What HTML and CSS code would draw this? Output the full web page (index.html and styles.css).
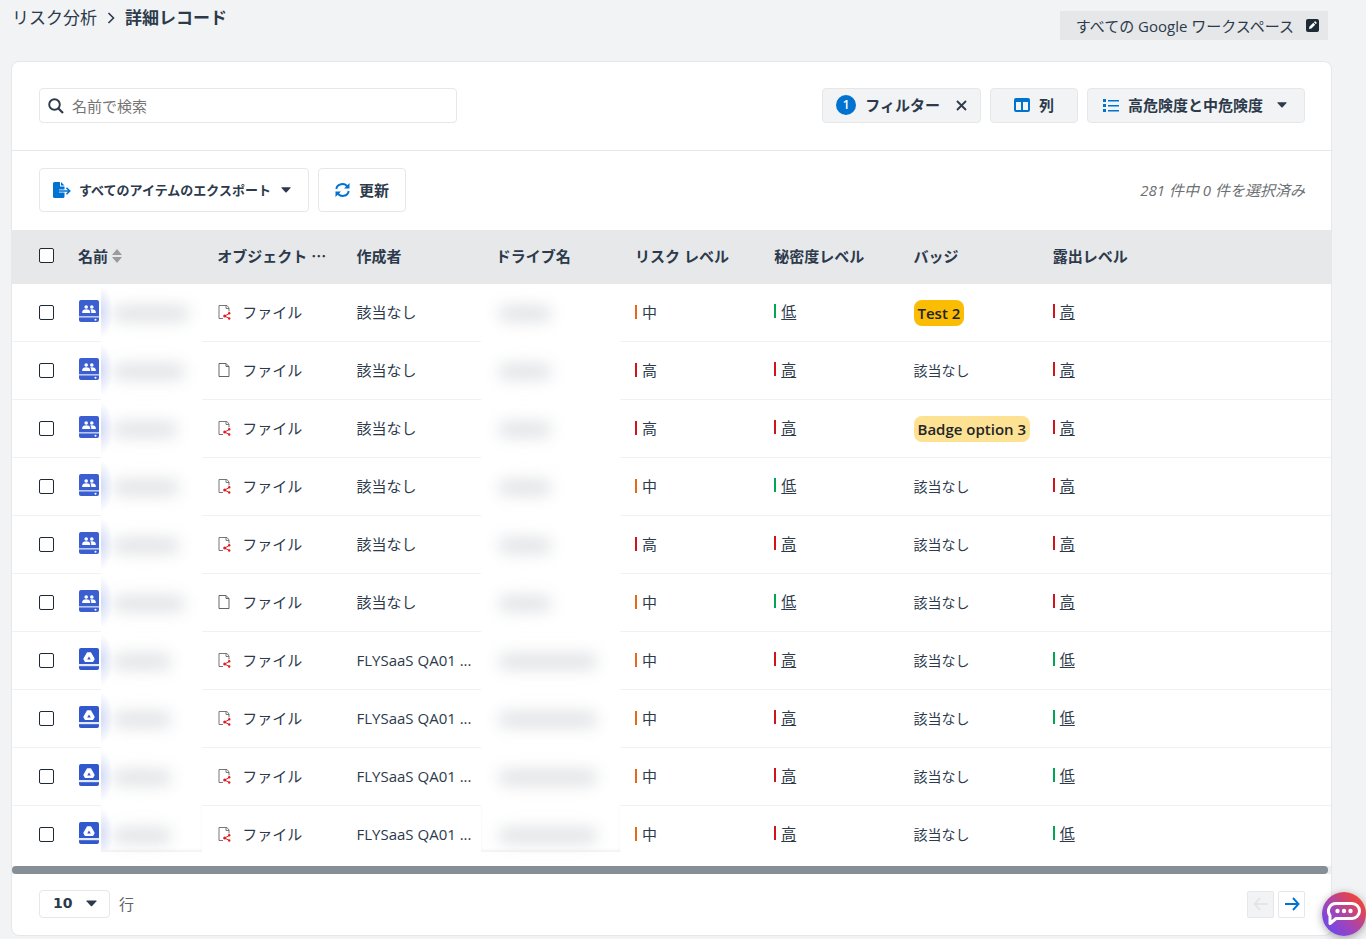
FILE: index.html
```html
<!DOCTYPE html>
<html lang="ja">
<head>
  <meta charset="UTF-8">
  <meta name="viewport" content="width=device-width, initial-scale=1.0">
  <title>詳細レコード</title>
  <link rel="stylesheet" href="styles.css">
</head>
<body>
  <svg class="sprite" aria-hidden="true">
    <symbol id="i-caret" viewBox="0 0 10 6"><path d="M0.8 0.3h8.4q.8 0 .3.7L5.6 5.3q-.6.6-1.2 0L.5 1Q0 .3.8.3z" fill="currentColor"/></symbol>
    <symbol id="i-shared" viewBox="0 0 20 22">
      <rect width="20" height="22" rx="2" fill="#3b5fd1"/>
      <rect y="16" width="20" height="1.6" fill="#b9c8f5"/>
      <circle cx="7.2" cy="7" r="1.8" fill="#fff"/><circle cx="12.8" cy="7" r="1.8" fill="#fff"/>
      <path d="M3.2 13v-1.2c0-1.7 2.4-2.5 4-2.5s4 .8 4 2.5V13zM12.2 13v-1.3c0-.9-.4-1.6-1-2.1 2-.7 5.6 0 5.6 2.2V13z" fill="#fff"/>
      <circle cx="16.5" cy="19.7" r="1" fill="#fff"/>
    </symbol>
    <symbol id="i-drive" viewBox="0 0 20 22">
      <rect width="20" height="22" rx="2" fill="#3158cd"/>
      <rect y="16" width="20" height="2.2" fill="#e3e9fb"/>
      <path d="M8.6 5h2.8l3.4 6-1.300 2.300H6.500L5.200 11z" fill="#fff" stroke="#fff" stroke-width="1.600" stroke-linejoin="round"/>
      <path d="M10 8.500l1.800 3H8.200z" fill="#3158cd"/>
    </symbol>
    <symbol id="i-file" viewBox="0 0 14 16">
      <path d="M1.500 1.500h7l3 3v10h-10zM8.500 1.500v3h3" fill="none" stroke="#666"/>
    </symbol>
    <symbol id="i-file-shared" viewBox="0 0 14 16">
      <path d="M5.500 14.500h-4v-13h8l2 2.500v3.500M8.500 1.500v3h3" fill="none" stroke="#777"/>
      <path d="M12 9.300l-4.800 2.700 4.800 2.700" fill="none" stroke="#e01b22"/>
      <circle cx="11.700" cy="9.300" r="1.200" fill="#e01b22"/><circle cx="7.200" cy="12" r="1.500" fill="#e01b22"/><circle cx="11.700" cy="14.500" r="1.200" fill="#e01b22"/>
    </symbol>
  </svg>

  <header class="page-header">
    <nav class="breadcrumb">
      <a href="#">リスク分析</a>
      <svg width="8" height="12" viewBox="0 0 8 12"><path d="M1.500 1l5 5-5 5" fill="none" stroke="currentColor" stroke-width="1.600"/></svg>
      <h1>詳細レコード</h1>
    </nav>
    <button class="workspace">
      すべての Google ワークスペース
      <svg width="13" height="13" viewBox="0 0 13 13"><rect width="13" height="13" rx="2" fill="#1f2a37"/><path d="M3 10l.5-2.400 3.800-3.800 1.900 1.900-3.800 3.800zM7.900 3.200l.7-.7q.5-.4 1 0l.9.900q.4.500 0 1l-.7.700z" fill="#fff"/></svg>
    </button>
  </header>

  <main class="card">
    <div class="toolbar filters">
      <label class="search">
        <svg width="16" height="16" viewBox="0 0 16 16"><circle cx="6.500" cy="6.500" r="5.300" fill="none" stroke="currentColor" stroke-width="1.900"/><path d="M10.500 10.500l4.500 4.500" stroke="currentColor" stroke-width="2.200"/></svg>
        <input type="search" placeholder="名前で検索" aria-label="名前で検索">
      </label>
      <div class="actions">
        <button class="btn filter">
          <span class="count">1</span>
          フィルター
          <svg class="close" width="11" height="11" viewBox="0 0 11 11"><path d="M1 1l9 9M10 1l-9 9" stroke="currentColor" stroke-width="1.800"/></svg>
        </button>
        <button class="btn columns">
          <svg width="16" height="14" viewBox="0 0 16 14"><path d="M2 0h12q2 0 2 2v10q0 2-2 2H2q-2 0-2-2V2q0-2 2-2zM2 4v8h5V4zM9 4v8h5V4z" fill="#0073d1" fill-rule="evenodd"/></svg>
          列
        </button>
        <label class="btn risk">
          <svg width="16" height="13" viewBox="0 0 16 13"><path d="M0 0h3v3H0zM0 5h3v3H0zM0 10h3v3H0zM5 1h11v1.500H5zM5 6h11v1.500H5zM5 11h11v1.500H5z" fill="#0073d1"/></svg>
          <select aria-label="危険度"><option>高危険度と中危険度</option></select>
          <svg class="caret" width="10" height="6"><use href="#i-caret"/></svg>
        </label>
      </div>
    </div>

    <div class="toolbar bulk">
      <div class="actions">
        <button class="btn-outline export">
          <svg width="18" height="16" viewBox="0 0 18 16"><path d="M1.500 0H7v4.500h4.500v3H6v3h5.500v4q0 1.500-1.500 1.500H1.500Q0 16 0 14.500v-13Q0 0 1.500 0zM8 0l3.500 3.500H8z" fill="#0073d1"/><path d="M6 9h10M13.500 5.800L16.700 9l-3.200 3.200" fill="none" stroke="#0073d1" stroke-width="1.600"/></svg>
          <span>すべてのアイテムのエクスポート</span>
          <svg class="caret" width="10" height="6"><use href="#i-caret"/></svg>
        </button>
        <button class="btn-outline">
          <svg width="15" height="14" viewBox="0 0 15 14"><path d="M1.300 6A6 5.600 0 0 1 12.500 4M13.700 8A6 5.600 0 0 1 2.500 10" fill="none" stroke="#0073d1" stroke-width="1.900"/><path d="M14.500 0v5.500H9zM.5 14V8.500H6z" fill="#0073d1"/></svg>
          更新
        </button>
      </div>
      <p class="selected">281 件中 0 件を選択済み</p>
    </div>

    <table>
      <colgroup>
        <col class="col-check"><col span="8"><col class="col-last">
      </colgroup>
      <thead>
        <tr>
          <th class="check"><input type="checkbox" aria-label="すべて選択"></th>
          <th><span class="sortable">名前
            <svg width="10" height="14" viewBox="0 0 10 14"><path d="M5 0l5 6H0zM5 14l5-6H0z" fill="#999b9e"/></svg></span></th>
          <th>オブジェクト <span class="more">…</span></th>
          <th>作成者</th>
          <th>ドライブ名</th>
          <th>リスク レベル</th>
          <th>秘密度レベル</th>
          <th>バッジ</th>
          <th>露出レベル</th>
          <th></th>
        </tr>
      </thead>
      <tbody id="records"></tbody>
    </table>
    <div class="scrollbar"><div class="thumb"></div></div>

    <footer class="pager">
      <label class="page-size">
        <span class="size-box">
          <select><option>10</option></select>
          <svg class="caret" width="11" height="7"><use href="#i-caret"/></svg>
        </span>
        行
      </label>
      <div class="pages">
        <button disabled aria-label="前へ"><svg width="16" height="14" viewBox="0 0 16 14"><path d="M15 7H1.500M7 1L1.500 7 7 13" fill="none" stroke="currentColor" stroke-width="1.900"/></svg></button>
        <button aria-label="次へ"><svg width="16" height="14" viewBox="0 0 16 14"><path d="M1 7h13.500M9 1l5.500 6L9 13" fill="none" stroke="currentColor" stroke-width="1.900"/></svg></button>
      </div>
    </footer>
  </main>

  <button class="chat" aria-label="チャット">
    <svg width="34" height="25" viewBox="0 0 34 25"><path d="M9 1.500h16a7.500 7.500 0 0 1 0 15H9l-6 5V13.500A7.500 7.500 0 0 1 9 1.500z" fill="none" stroke="#fff" stroke-width="3" stroke-linejoin="round"/><circle cx="10.500" cy="9" r="2.200" fill="#fff"/><circle cx="17" cy="9" r="2.200" fill="#fff"/><circle cx="23.500" cy="9" r="2.200" fill="#fff"/></svg>
  </button>

  <script src="script.js"></script>
</body>
</html>
```
FILE: styles.css
```css
:root {
  --text: #2c3a4b;
  --blue: #0073d1;
  --border: #e5e7e9;
  --page-bg: #f1f3f5;
}

* {
  box-sizing: border-box;
}

body {
  margin: 0;
  background: var(--page-bg);
  color: var(--text);
  font-family: "Open Sans", "Noto Sans CJK JP", sans-serif;
  font-size: 15px;
  line-height: 20px;
}

button,
input,
select {
  font: inherit;
  color: inherit;
}

select {
  appearance: none;
  border: 0;
  padding: 0;
  background: none;
}

svg {
  flex: none;
}

.sprite {
  position: absolute;
  width: 0;
  height: 0;
}

.page-header {
  display: flex;
  justify-content: space-between;
  align-items: flex-start;
  height: 61px;
  padding: 8px 38px 0 12px;
}

.breadcrumb {
  display: flex;
  align-items: center;
  gap: 10px;
  font-size: 17px;
}

.breadcrumb a {
  color: inherit;
  text-decoration: none;
}

.breadcrumb h1 {
  margin: 0;
  font-size: 17px;
  font-weight: 700;
}

.workspace {
  display: flex;
  align-items: center;
  gap: 12px;
  height: 29px;
  margin-top: 3px;
  padding: 0 9px 0 16px;
  border: 0;
  background: #e5e7e9;
}

.card {
  margin: 0 34px 4px 11px;
  border: 1px solid var(--border);
  border-radius: 8px;
  background: #fff;
}

.toolbar {
  display: flex;
  justify-content: space-between;
  align-items: center;
}

.filters {
  padding: 26px 26px 27px 27px;
  border-bottom: 1px solid var(--border);
}

.bulk {
  padding: 17px 26px 18px 27px;
}

.search {
  display: flex;
  align-items: center;
  gap: 8px;
  width: 418px;
  height: 35px;
  padding: 0 8px;
  border: 1px solid var(--border);
  border-radius: 4px;
}

.search input {
  flex: 1;
  padding: 0;
  border: 0;
  outline: 0;
}

.search input::placeholder {
  color: #757575;
}

.actions {
  display: flex;
  gap: 9px;
}

.btn,
.btn-outline {
  display: flex;
  align-items: center;
  border: 1px solid var(--border);
  border-radius: 4px;
  font-weight: 700;
}

.btn {
  gap: 9px;
  height: 35px;
  padding: 0 13px 1px;
  background: var(--page-bg);
}

.btn-outline {
  gap: 9px;
  height: 44px;
  padding: 0 16px;
  background: #fff;
}

.btn.columns {
  padding: 0 23px 1px;
}

.btn.risk {
  padding: 0 17px 1px 15px;
}

.btn.risk .caret {
  margin-left: 4px;
}

.btn-outline.export {
  gap: 8px;
  padding: 0 17px 0 13px;
  font-size: 13px;
}

.export .caret {
  margin-left: 2px;
}

.count {
  width: 20px;
  border-radius: 50%;
  background: var(--blue);
  color: #fff;
  font-size: 12px;
  font-weight: 600;
  text-align: center;
}

.close {
  margin-left: 7px;
}

.selected {
  margin: 0;
  color: #6c6f73;
  font-style: italic;
}

table {
  width: 100%;
  table-layout: fixed;
  border-spacing: 0;
}

.col-check {
  width: 51px;
}

.col-last {
  width: 154px;
}

th {
  height: 54px;
  padding: 0 0 3px 15px;
  background: #e7e8ea;
  text-align: left;
  white-space: nowrap;
}

td {
  height: 58px;
  padding: 0 0 2px 15px;
  border-bottom: 1px solid #f0f1f2;
  white-space: nowrap;
}

th.check,
td.check {
  padding-left: 27px;
}

td.check {
  padding-bottom: 0;
}

td.link {
  padding-bottom: 4px;
}

tr:last-child td {
  border-color: transparent;
}

input[type="checkbox"] {
  display: block;
  appearance: none;
  width: 15px;
  height: 15px;
  margin: 0;
  border: 1px solid #1f2a37;
  border-radius: 2px;
  background: #fff;
}

.sortable {
  display: flex;
  align-items: center;
  gap: 4px;
}

.more {
  font-family: "Noto Sans CJK JP", sans-serif;
  line-height: 16px;
}

td.name,
td.drive {
  padding: 0;
  border: 0;
}

.name-inner {
  display: flex;
  height: 58px;
}

.name-icon {
  width: 38px;
  padding: 16px 0 0 16px;
  border-bottom: 1px solid #f0f1f2;
}

tr:last-child .name-icon {
  border-color: transparent;
}

/* hidden values, only a smudge of the text is left */
.masked {
  flex: 1;
  height: 58px;
  padding: 22px 0 0 12px;
  overflow: hidden;
}

.name .masked {
  background: radial-gradient(ellipse 12px 26px at 0 28px, #d3dbf8, transparent);
}

.drive .masked {
  padding-left: 18px;
}

tr:last-child .masked {
  background-color: #fff;
  box-shadow: inset 0 -12px #fff, inset 0 -14px 3px #f1f2f2;
}

.smudge {
  display: block;
  height: 15px;
  border-radius: 6px;
  background: #dfe1e4;
  filter: blur(8px);
}

.object,
.level {
  display: flex;
  align-items: center;
}

.object {
  gap: 10px;
}

.level {
  gap: 5px;
}

.level::before {
  content: "";
  width: 2px;
  height: 14px;
  background: #d0141c;
}

.level.mid::before {
  background: #e8681a;
}

.level.low::before {
  background: #00a651;
}

.level a {
  color: inherit;
  text-underline-offset: 2px;
}

.badge {
  display: inline-block;
  padding: 3px 4px;
  border-radius: 8px;
  background: #fbbc04;
  color: #212529;
  font-weight: 600;
}

.badge.light {
  background: #fde293;
}

td.badges {
  padding-bottom: 0;
}

.none {
  font-size: 14px;
}

td.creator {
  overflow: hidden;
  padding-right: 6px;
  text-overflow: ellipsis;
}

.scrollbar {
  margin-top: 2px;
  padding-right: 3px;
  background: #eceeef;
}

.thumb {
  height: 8px;
  border-radius: 4px;
  background: #868e96;
}

.pager {
  display: flex;
  justify-content: space-between;
  align-items: center;
  padding: 16px 26px 17px 27px;
}

.page-size {
  display: flex;
  align-items: center;
  gap: 9px;
  color: #5c636a;
}

.size-box {
  display: flex;
  align-items: center;
  gap: 13px;
  height: 28px;
  padding: 0 12px 2px 13px;
  border: 1px solid var(--border);
  border-radius: 4px;
  color: var(--text);
}

.size-box select {
  font-family: "DejaVu Sans", sans-serif;
  font-size: 14px;
  font-weight: 700;
}

.pages {
  display: flex;
  gap: 4px;
}

.pages button {
  display: flex;
  align-items: center;
  justify-content: center;
  width: 27px;
  height: 27px;
  padding: 0;
  border: 1px solid var(--border);
  border-radius: 2px;
  background: #fff;
  color: var(--blue);
}

.pages button:disabled {
  background: var(--page-bg);
  color: #e3e5e7;
}

.chat {
  position: fixed;
  right: 0;
  bottom: 3px;
  width: 44px;
  height: 44px;
  padding: 5px 0 0;
  border: 0;
  border-radius: 50%;
  background: linear-gradient(45deg, #6b46f0 10%, #a544b4 45%, #f04438 85%);
  box-shadow: 0 2px 8px rgba(0, 0, 0, 0.35);
}
```
FILE: script.js
```js
const levels = { high: '高', mid: '中', low: '低' };

// icon, name width, shared, creator, drive width, risk, sensitivity, badge, exposure
const rows = [
  ['shared', 76, true, '該当なし', 52, 'mid', 'low', 'Test 2', 'high'],
  ['shared', 72, false, '該当なし', 52, 'high', 'high', '', 'high'],
  ['shared', 64, true, '該当なし', 52, 'high', 'high', 'Badge option 3', 'high'],
  ['shared', 66, true, '該当なし', 52, 'mid', 'low', '', 'high'],
  ['shared', 66, true, '該当なし', 52, 'high', 'high', '', 'high'],
  ['shared', 72, false, '該当なし', 52, 'mid', 'low', '', 'high'],
  ['drive', 58, true, 'FLYSaaS QA01 ...', 98, 'mid', 'high', '', 'low'],
  ['drive', 58, true, 'FLYSaaS QA01 ...', 98, 'mid', 'high', '', 'low'],
  ['drive', 58, true, 'FLYSaaS QA01 ...', 98, 'mid', 'high', '', 'low'],
  ['drive', 58, true, 'FLYSaaS QA01 ...', 98, 'mid', 'high', '', 'low'],
];

function badge(text) {
  if (!text) return '<span class="none">該当なし</span>';
  return `<span class="badge ${text === 'Test 2' ? '' : 'light'}">${text}</span>`;
}

function levelLink(level) {
  return `<span class="level ${level}"><a href="#">${levels[level]}</a></span>`;
}

document.getElementById('records').innerHTML = rows.map((r, i) => `
  <tr>
    <td class="check"><input type="checkbox" aria-label="行 ${i + 1} を選択"></td>
    <td class="name"><div class="name-inner">
      <div class="name-icon"><svg width="20" height="22"><use href="#i-${r[0]}"/></svg></div>
      <div class="masked"><span class="smudge" style="width:${r[1]}px"></span></div>
    </div></td>
    <td><span class="object"><svg width="15" height="16"><use href="#i-${r[2] ? 'file-shared' : 'file'}"/></svg>ファイル</span></td>
    <td class="creator">${r[3]}</td>
    <td class="drive"><div class="masked"><span class="smudge" style="width:${r[4]}px"></span></div></td>
    <td><span class="level ${r[5]}">${levels[r[5]]}</span></td>
    <td class="link">${levelLink(r[6])}</td>
    <td class="badges">${badge(r[7])}</td>
    <td class="link">${levelLink(r[8])}</td>
    <td></td>
  </tr>`).join('');
```
